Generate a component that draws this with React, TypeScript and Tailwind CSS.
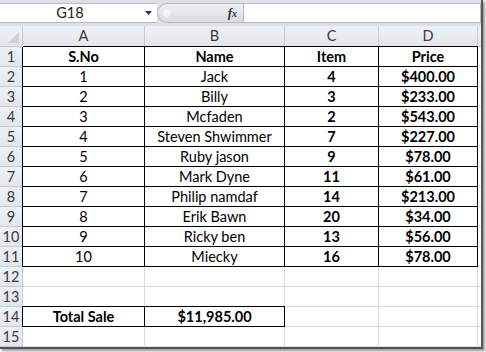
import React from "react";

const rows: [string, string, string, string][] = [
  ["1", "Jack", "4", "$400.00"],
  ["2", "Billy", "3", "$233.00"],
  ["3", "Mcfaden", "2", "$543.00"],
  ["4", "Steven Shwimmer", "7", "$227.00"],
  ["5", "Ruby jason", "9", "$78.00"],
  ["6", "Mark Dyne", "11", "$61.00"],
  ["7", "Philip namdaf", "14", "$213.00"],
  ["8", "Erik Bawn", "20", "$34.00"],
  ["9", "Ricky ben", "13", "$56.00"],
  ["10", "Miecky", "16", "$78.00"],
];

const rowHead =
  "h-[20px] border-r border-b border-[#c5cad1] bg-gradient-to-b from-[#eef1f4] to-[#e3e7ec] text-[#3a3a3a] flex items-center justify-center text-[14.5px]";
const plain = "h-[20px] border-r border-b border-[#dadcdf] bg-white";
const boxed =
  "h-[20px] border-r border-b border-black bg-white flex items-center justify-center text-[14.5px] text-black pt-[1px]";

function Row({
  n,
  cells,
  bold,
  span,
  top,
}: {
  n: number;
  cells?: string[];
  bold?: boolean[];
  span?: number;
  top?: boolean;
}) {
  const count = span ?? 0;
  return (
    <>
      <div className={rowHead}>{n}</div>
      {[0, 1, 2, 3].map((i) => {
        if (i < count && cells) {
          const left = i === 0;
          const sh =
            left && top
              ? "shadow-[-1px_0_0_#000,0_-1px_0_#000,-1px_-1px_0_#000]"
              : left
              ? "shadow-[-1px_0_0_#000]"
              : top
              ? "shadow-[0_-1px_0_#000]"
              : "";
          return (
            <div
              key={i}
              className={`${boxed} ${sh} ${bold && bold[i] ? "font-bold" : ""}`}
            >
              {cells[i]}
            </div>
          );
        }
        return <div key={i} className={plain} />;
      })}
      <div className="h-[20px] border-b border-[#dadcdf] bg-white" />
    </>
  );
}

export default function App() {
  return (
    <div className="w-[486px] h-[352px] bg-[#f4f4f4] overflow-hidden font-['Lato',sans-serif]">
      <div className="w-[483px] h-[349px] border-r-2 border-b-2 border-[#555] bg-[#dde1e6] shadow-[2px_2px_2px_rgba(0,0,0,0.35)] flex flex-col">
        {/* formula bar */}
        <div className="h-[26px] pt-[3px] pb-[3px] flex items-stretch">
          <div className="w-[140px] bg-white border-t border-b border-[#b7bcc3] flex items-center justify-center text-[14.5px] text-[#222]">
            G18
          </div>
          <div className="w-[17px] bg-white border-t border-b border-[#b7bcc3] flex items-center justify-center">
            <svg width="7" height="4" viewBox="0 0 7 4">
              <path d="M0 0h7L3.5 4z" fill="#333" />
            </svg>
          </div>
          <div className="w-[86px] rounded-l-[11px] border border-r-0 border-[#b7bcc3] bg-gradient-to-b from-[#eef0f3] to-[#d9dde2] flex items-center justify-between pl-[5px] pr-[6px]">
            <div className="w-[8px] h-[8px] rounded-full bg-[#f6f7f9] opacity-80" />
            <span className="font-['Liberation_Serif',serif] italic font-bold text-[13px] text-[#333]">
              f<span className="text-[10px]">x</span>
            </span>
          </div>
          <div className="flex-1 bg-white border border-[#b7bcc3]" />
        </div>
        {/* grid */}
        <div className="grid grid-cols-[23px_122px_140px_94px_99px_1fr]">
          <div className="h-[21px] border-r border-b border-[#c5cad1] bg-gradient-to-b from-[#eef1f4] to-[#e3e7ec] relative">
            <svg className="absolute right-[3px] bottom-[3px]" width="11" height="11" viewBox="0 0 11 11">
              <path d="M11 0V11H0z" fill="#cdd2d8" />
            </svg>
          </div>
          {["A", "B", "C", "D", ""].map((c, i) => (
            <div
              key={i}
              className={`h-[21px] ${i < 4 ? "border-r" : ""} border-b border-[#c5cad1] bg-gradient-to-b from-[#eef1f4] to-[#e3e7ec] flex items-center justify-center text-[14.5px] text-[#3a3a3a]`}
            >
              {c}
            </div>
          ))}
          <Row
            n={1}
            cells={["S.No", "Name", "Item", "Price"]}
            bold={[true, true, true, true]}
            span={4}
            top
          />
          {rows.map((r, i) => (
            <Row
              key={i}
              n={i + 2}
              cells={r}
              bold={[false, false, true, true]}
              span={4}
            />
          ))}
          <Row n={12} />
          <Row n={13} />
          <Row
            n={14}
            cells={["Total Sale", "$11,985.00"]}
            bold={[true, true]}
            span={2}
            top
          />
          <Row n={15} />
        </div>
      </div>
    </div>
  );
}
